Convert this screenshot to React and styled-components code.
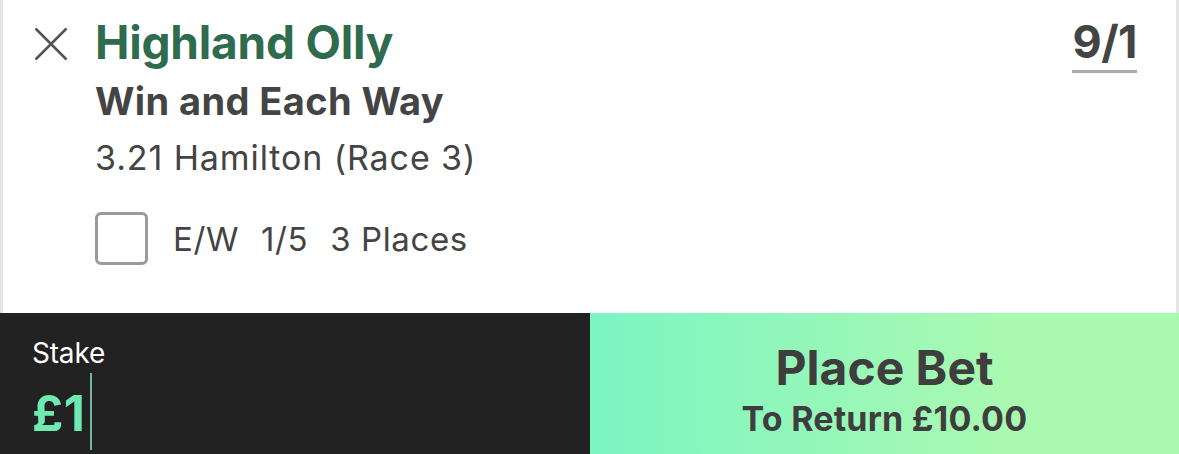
import React from 'react'
import styled, {createGlobalStyle} from 'styled-components'

const GlobalStyle = createGlobalStyle`
  html, body {
    margin: 0;
    padding: 0;
    background: #fff;
  }

  body {
    font-family: Inter, "Noto Sans", "Liberation Sans", sans-serif;
    -webkit-font-smoothing: antialiased;
  }

  *, :after, :before {
    box-sizing: border-box;
  }
`

const Slip = styled.div`
  width: 1179px;
  height: 454px;
  display: flex;
  flex-direction: column;
  overflow: hidden;
`

const Selection = styled.div`
  flex: 1;
  display: flex;
  align-items: flex-start;
  background: #fff;
  border-left: 3px solid #e4e4e4;
  border-right: 3px solid #e4e4e4;
  padding: 27px 39px 0 31px;
`

const CloseButton = styled.button`
  width: 34px;
  height: 34px;
  padding: 0;
  border: 0;
  background: none;
  display: flex;
  flex-shrink: 0;
  cursor: pointer;
`

const Details = styled.div`
  flex: 1;
  margin-left: 27px;
  margin-top: -13px;
  display: flex;
  flex-direction: column;
  align-items: flex-start;
`

const Runner = styled.div`
  font-size: 46px;
  line-height: 56px;
  font-weight: 700;
  color: #2f6b4f;
  letter-spacing: -0.2px;
`

const Market = styled.div`
  margin-top: 7px;
  font-size: 38px;
  line-height: 48px;
  font-weight: 700;
  color: #444;
  letter-spacing: 0.4px;
`

const Race = styled.div`
  margin-top: 12px;
  font-size: 34px;
  line-height: 42px;
  font-weight: 400;
  color: #444;
  letter-spacing: 0.9px;
`

const EachWay = styled.label`
  margin-top: 33px;
  display: flex;
  align-items: center;
  gap: 25px;
  font-size: 33px;
  color: #444;
  letter-spacing: 0.6px;
  cursor: pointer;
`

const Box = styled.span`
  width: 53px;
  height: 53px;
  border: 3px solid #9a9a9a;
  border-radius: 6px;
  flex-shrink: 0;
`

const Terms = styled.span`
  display: flex;
  gap: 22px;
  line-height: 42px;
`

const Odds = styled.div`
  margin-top: -13px;
  font-size: 45px;
  line-height: 56px;
  font-weight: 700;
  color: #444;
  border-bottom: 3px solid #aaa;
  letter-spacing: -0.5px;
`

const Footer = styled.div`
  height: 141px;
  display: grid;
  grid-template-columns: 590px 1fr;
`

const StakeBox = styled.div`
  background: #222;
  padding: 22px 0 0 32px;
  display: flex;
  flex-direction: column;
`

const StakeLabel = styled.div`
  font-size: 28px;
  line-height: 36px;
  color: #fff;
  letter-spacing: -0.2px;
`

const StakeInput = styled.div`
  margin-top: 2px;
  display: flex;
  align-items: flex-start;
  font-size: 49px;
  line-height: 56px;
  font-weight: 700;
  color: #6eeab2;
  letter-spacing: 0.5px;
`

const Amount = styled.span`
  margin-top: 13px;
`

const Caret = styled.span`
  width: 2px;
  height: 77px;
  margin-left: 5px;
  background: #6fb99a;
`

const PlaceBet = styled.button`
  border: 0;
  padding: 12px 0 0;
  background: linear-gradient(90deg, #7bf5c2 0%, #99f7b8 45%, #a9f9b1 70%, #a9f9b1 100%);
  display: flex;
  flex-direction: column;
  align-items: center;
  justify-content: center;
  font-family: inherit;
  color: #3e3e3e;
  cursor: pointer;
`

const PlaceTitle = styled.span`
  font-size: 48px;
  line-height: 56px;
  font-weight: 700;
`

const Returns = styled.span`
  margin-top: 3px;
  font-size: 34px;
  line-height: 40px;
  font-weight: 700;
  letter-spacing: 0.2px;
`

const Cross = () => (
  <svg width="34" height="34" viewBox="0 0 34 34">
    <path d="M1.5 1.5 L32.5 32.5 M32.5 1.5 L1.5 32.5" stroke="#555" strokeWidth="2.6" fill="none" />
  </svg>
)

export default function App () {
  return (
    <Slip>
      <GlobalStyle />
      <Selection>
        <CloseButton aria-label="Remove selection">
          <Cross />
        </CloseButton>
        <Details>
          <Runner>Highland Olly</Runner>
          <Market>Win and Each Way</Market>
          <Race>3.21 Hamilton (Race 3)</Race>
          <EachWay>
            <Box />
            <Terms>
              <span>E/W</span>
              <span>1/5</span>
              <span>3 Places</span>
            </Terms>
          </EachWay>
        </Details>
        <Odds>9/1</Odds>
      </Selection>
      <Footer>
        <StakeBox>
          <StakeLabel>Stake</StakeLabel>
          <StakeInput>
            <Amount>£1</Amount>
            <Caret />
          </StakeInput>
        </StakeBox>
        <PlaceBet>
          <PlaceTitle>Place Bet</PlaceTitle>
          <Returns>To Return £10.00</Returns>
        </PlaceBet>
      </Footer>
    </Slip>
  )
}
